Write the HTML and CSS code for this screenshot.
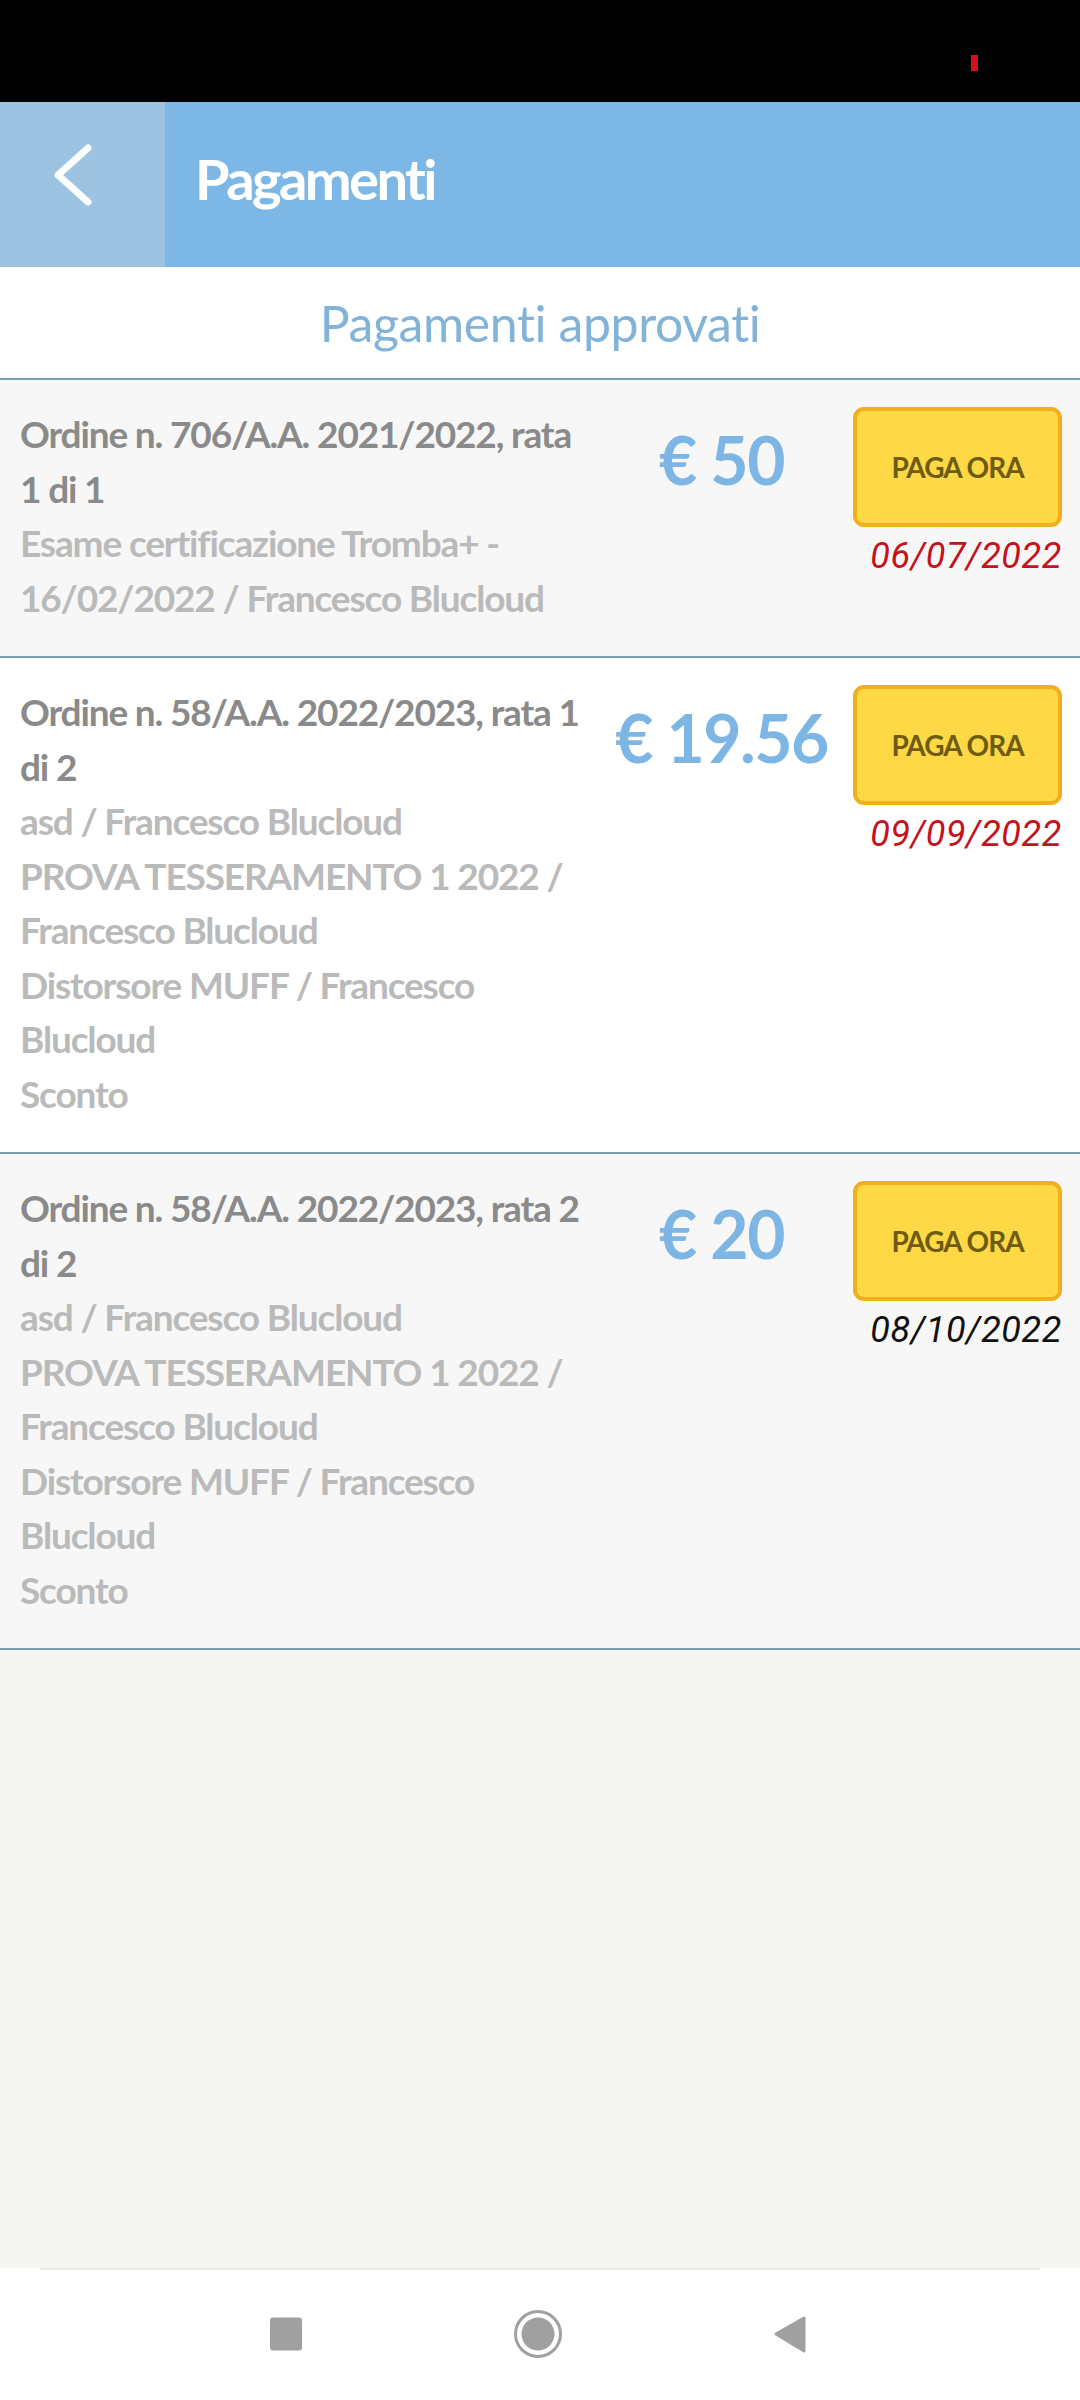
FILE: index.html
```html
<!DOCTYPE html>
<html lang="it">
    <head>
        <meta charset="UTF-8" />
        <meta name="viewport" content="width=device-width, initial-scale=1.0" />
        <title>Pagamenti</title>
        <link rel="stylesheet" href="styles.css">
    </head>
    <body>
        <div id="contenedor">
            <div class="barraStato">
                <span class="puntoRec"></span>
            </div>
            <header>
                <a class="indietro" href="#">
                    <svg width="165" height="165" viewBox="0 0 165 165">
                        <polyline points="88,46 58,73 88,100" fill="none" stroke="#fff" stroke-width="7" stroke-linecap="round" stroke-linejoin="round" />
                    </svg>
                </a>
                <h1>Pagamenti</h1>
            </header>
            <h2 class="sottotitolo">Pagamenti approvati</h2>

            <div class="elenco">
                <div class="pagamento">
                    <div class="dettaglio">
                        <div class="ordine">Ordine n. 706/A.A. 2021/2022, rata 1 di 1</div>
                        <div class="voce">Esame certificazione Tromba+ - 16/02/2022 / Francesco Blucloud</div>
                    </div>
                    <div class="importo">€ 50</div>
                    <div class="azioni">
                        <button class="paga">PAGA ORA</button>
                        <div class="scadenza scaduta">06/07/2022</div>
                    </div>
                </div>

                <div class="pagamento bianco">
                    <div class="dettaglio">
                        <div class="ordine">Ordine n. 58/A.A. 2022/2023, rata 1 di 2</div>
                        <div class="voce">asd / Francesco Blucloud</div>
                        <div class="voce">PROVA TESSERAMENTO 1 2022 / Francesco Blucloud</div>
                        <div class="voce">Distorsore MUFF / Francesco Blucloud</div>
                        <div class="voce">Sconto</div>
                    </div>
                    <div class="importo">€ 19.56</div>
                    <div class="azioni">
                        <button class="paga">PAGA ORA</button>
                        <div class="scadenza scaduta">09/09/2022</div>
                    </div>
                </div>

                <div class="pagamento">
                    <div class="dettaglio">
                        <div class="ordine">Ordine n. 58/A.A. 2022/2023, rata 2 di 2</div>
                        <div class="voce">asd / Francesco Blucloud</div>
                        <div class="voce">PROVA TESSERAMENTO 1 2022 / Francesco Blucloud</div>
                        <div class="voce">Distorsore MUFF / Francesco Blucloud</div>
                        <div class="voce">Sconto</div>
                    </div>
                    <div class="importo">€ 20</div>
                    <div class="azioni">
                        <button class="paga">PAGA ORA</button>
                        <div class="scadenza">08/10/2022</div>
                    </div>
                </div>
            </div>

            <div class="vuoto"></div>

            <nav class="navSistema">
                <div class="navLinea"></div>
                <div class="navTasti">
                    <svg width="50" height="50" viewBox="0 0 50 50">
                        <rect x="9" y="8.5" width="32" height="33" rx="3" fill="#a0a0a0" />
                    </svg>
                    <svg width="50" height="50" viewBox="0 0 50 50">
                        <circle cx="25" cy="25" r="22.5" fill="none" stroke="#a0a0a0" stroke-width="3" />
                        <circle cx="25" cy="25" r="16.5" fill="#a0a0a0" />
                    </svg>
                    <svg width="50" height="50" viewBox="0 0 50 50">
                        <polygon points="11,25 39,9 39,42" fill="#a0a0a0" stroke="#a0a0a0" stroke-width="3" stroke-linejoin="round" />
                    </svg>
                </div>
            </nav>
        </div>
    </body>
</html>
```

FILE: styles.css
```css
*{
    margin: 0;
    padding: 0;
    box-sizing: border-box;
}
body{
    font-family: Lato, "Open Sans", sans-serif;
    background-color: #f5f5f2;
}
#contenedor{
    width: 1080px;
    height: 2400px;
    display: flex;
    flex-direction: column;
}
.barraStato{
    height: 102px;
    background-color: #000;
    display: flex;
    justify-content: flex-end;
    padding: 55px 102px 0 0;
}
.puntoRec{
    width: 7px;
    height: 16px;
    background-color: #d0101a;
}
header{
    height: 165px;
    background-color: #7db7e6;
    display: flex;
    align-items: center;
}
.indietro{
    display: block;
    width: 165px;
    height: 165px;
    background-color: #9dc3e2;
}
.indietro svg{
    display: block;
}
header h1{
    color: #fff;
    font-size: 56px;
    font-weight: 700;
    margin: 0 0 12px 30px;
    letter-spacing: -2.6px;
}
.sottotitolo{
    height: 113px;
    background-color: #fff;
    border-bottom: 2px solid #7a9db6;
    display: flex;
    align-items: center;
    justify-content: center;
    color: #82b3d9;
    font-size: 50px;
    font-weight: 400;
    letter-spacing: -0.4px;
}
.pagamento{
    display: grid;
    grid-template-columns: 570px 1fr 209px;
    padding: 27px 18px 31px 20px;
    background-color: #f7f7f7;
    border-bottom: 2px solid #7a9db6;
}
.pagamento.bianco{
    background-color: #fff;
}
.dettaglio{
    font-size: 37px;
    font-weight: 700;
    line-height: 54.5px;
    letter-spacing: -1.15px;
}
.ordine{
    color: #8a8a8a;
}
.voce{
    color: #bababa;
}
.importo{
    margin-top: 20px;
    text-align: center;
    color: #7db6e4;
    font-size: 66px;
    font-weight: 700;
    line-height: 1;
    letter-spacing: -1.5px;
    white-space: nowrap;
}
.azioni{
    display: flex;
    flex-direction: column;
    align-items: flex-end;
}
.paga{
    width: 209px;
    height: 120px;
    background-color: #ffd845;
    border: 4px solid #f1ae1d;
    border-radius: 11px;
    color: #6d5c12;
    font-family: Lato, sans-serif;
    font-size: 28px;
    font-weight: 700;
    letter-spacing: -1px;
}
.scadenza{
    margin-top: 8px;
    font-family: Roboto, "Liberation Sans", sans-serif;
    font-style: italic;
    font-size: 36px;
    letter-spacing: 0.6px;
    color: #111;
}
.scadenza.scaduta{
    color: #c5121c;
}
.vuoto{
    flex: 1;
    background-color: #f5f5f2;
}
.navSistema{
    height: 132px;
    background-color: #fff;
    display: flex;
    flex-direction: column;
}
.navLinea{
    margin: 0 40px;
    border-top: 2px solid #ecece7;
}
.navTasti{
    flex: 1;
    display: flex;
    align-items: center;
    justify-content: center;
    gap: 202px;
    padding: 0 4px 2px 0;
}
.navTasti svg{
    display: block;
}
```
